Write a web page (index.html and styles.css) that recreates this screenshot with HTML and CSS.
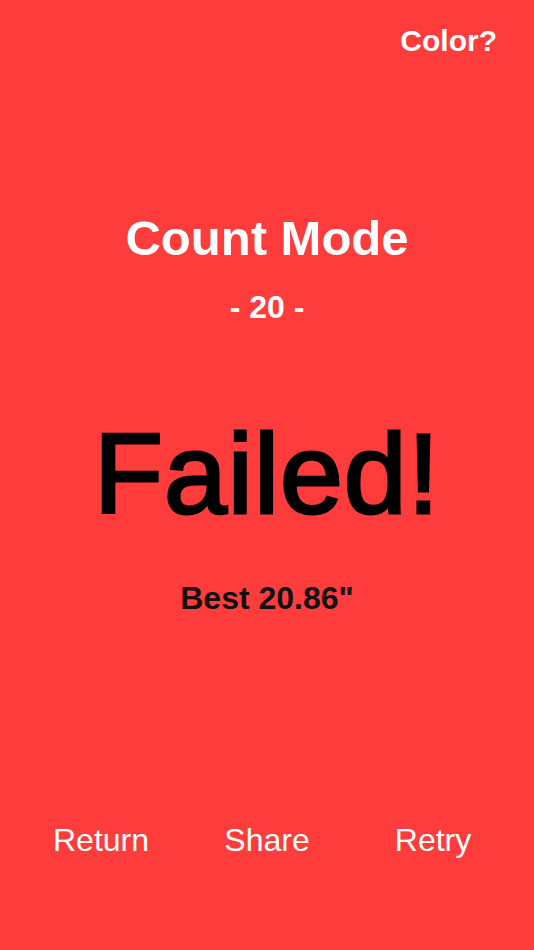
FILE: index.html
```html
<!DOCTYPE html>
<html>
<head>
<meta charset="utf-8">
<link rel="stylesheet" href="styles.css">
</head>
<body>
<div class="screen">
  <div class="topbar"><span class="color-btn">Color?</span></div>
  <h1 class="mode">Count Mode</h1>
  <div class="level">- 20 -</div>
  <div class="result">Failed!</div>
  <div class="best">Best 20.86"</div>
  <div class="actions">
    <span class="action">Return</span>
    <span class="action">Share</span>
    <span class="action">Retry</span>
  </div>
</div>
</body>
</html>
```
FILE: styles.css
```css
html, body {
  margin: 0;
  padding: 0;
  background: #fe3c3c;
}
body {
  font-family: "Liberation Sans", Arial, sans-serif;
  width: 534px;
  height: 950px;
  overflow: hidden;
}
.screen {
  display: flex;
  flex-direction: column;
  align-items: stretch;
  padding-top: 26px;
  line-height: 1;
  text-align: center;
}
.topbar {
  display: flex;
  justify-content: flex-end;
  padding-right: 37px;
}
.color-btn {
  color: #fff;
  font-size: 30px;
  font-weight: bold;
}
.mode {
  margin: 158px 0 0;
  color: #fff;
  font-size: 49px;
  font-weight: bold;
}
.level {
  margin-top: 28px;
  color: #fff;
  font-size: 32px;
  font-weight: bold;
}
.result {
  margin-top: 95px;
  color: #000;
  font-size: 113px;
  font-weight: normal;
  letter-spacing: 1px;
  -webkit-text-stroke: 3px #000;
}
.best {
  margin-top: 51px;
  color: #111;
  font-size: 32px;
  font-weight: bold;
}
.actions {
  margin-top: 210px;
  display: grid;
  grid-template-columns: repeat(3, 1fr);
  padding: 0 18px;
}
.action {
  color: #fff;
  font-size: 32px;
}
```
